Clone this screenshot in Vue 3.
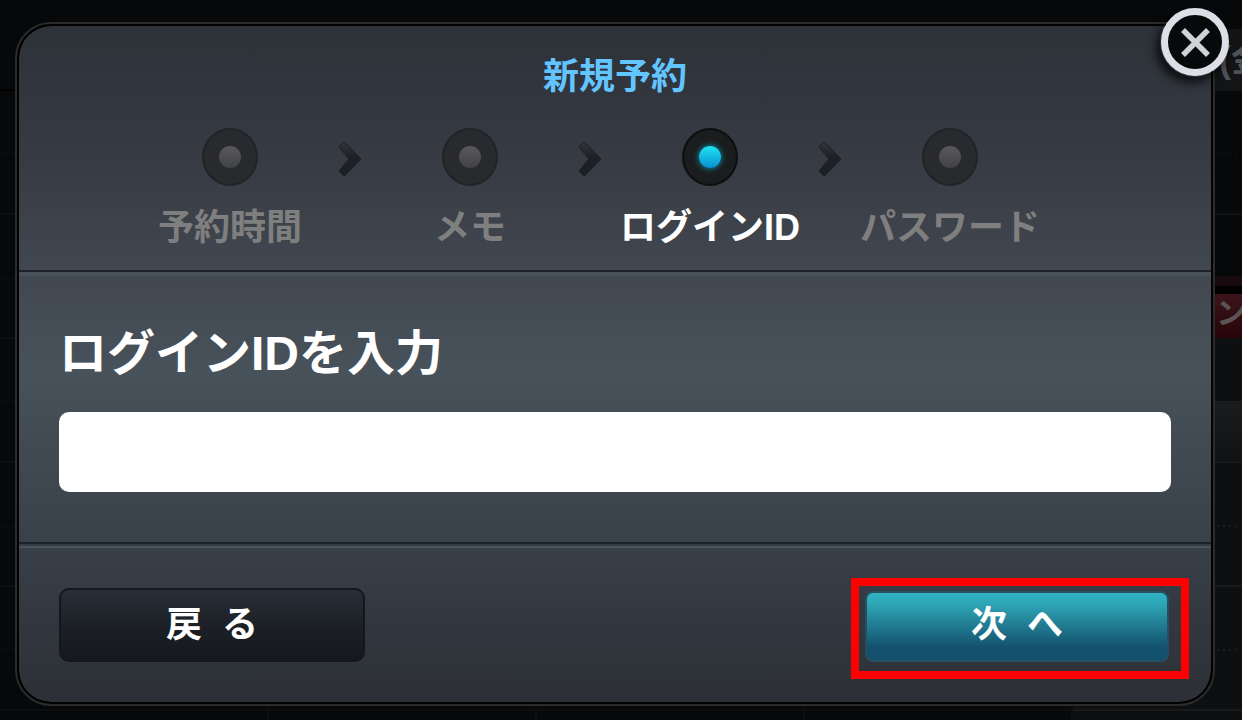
<script setup>
import { ref } from 'vue'

const loginId = ref('')
const steps = [
  { label: '予約時間', active: false },
  { label: 'メモ', active: false },
  { label: 'ログインID', active: true },
  { label: 'パスワード', active: false }
]
const rows = 6
const columns = 5
</script>

<template>
  <div class="stage">
    <div class="schedule">
      <div class="sched-head">
        <span v-for="c in columns" :key="c" class="day" :class="{ last: c === columns }">
          <template v-if="c === columns">(金)</template>
        </span>
      </div>
      <div v-for="r in rows" :key="r" class="sched-row">
        <div v-for="c in columns" :key="c" class="cell" :class="{ last: c === columns, early: r < 3, lit: c === columns && r === 3 }">
          <span v-if="c === columns && r === 2" class="chip">ン</span>
        </div>
      </div>
    </div>

    <main class="dialog" role="dialog" aria-labelledby="dialog-title">
      <button class="close" type="button" aria-label="閉じる">
        <svg viewBox="0 0 70 70" width="70" height="70" aria-hidden="true">
          <circle cx="35" cy="35" r="30.5" fill="#08090b" stroke="#dce0e6" stroke-width="7" />
          <path d="M23 23 L48 48 M48 23 L23 48" fill="none" stroke="#d0d2d6" stroke-width="5.5" />
        </svg>
      </button>
      <header class="head">
        <h1 id="dialog-title">新規予約</h1>
        <ol class="steps">
          <li v-for="(s, i) in steps" :key="s.label" :class="{ active: s.active }">
            <span class="lamp"><i></i></span>
            <span class="label">{{ s.label }}</span>
            <svg v-if="i < steps.length - 1" class="arrow" viewBox="0 0 24 38" width="24" height="38" aria-hidden="true">
              <defs>
                <linearGradient :id="'arrow' + i" x1="0" y1="0" x2="0" y2="1">
                  <stop offset="0" stop-color="#34383e" />
                  <stop offset="0.45" stop-color="#1d2024" />
                  <stop offset="1" stop-color="#1b2026" />
                </linearGradient>
              </defs>
              <path d="M1 7 L6 1.5 L23 19 L6 36.5 L1 31 L11 19 Z" :fill="'url(#arrow' + i + ')'" stroke="#1b1f24" stroke-width="1" />
            </svg>
          </li>
        </ol>
      </header>
      <section class="body">
        <label for="login-id">ログインIDを入力</label>
        <input id="login-id" v-model="loginId" type="text" autocomplete="off" />
      </section>
      <footer class="foot">
        <button class="btn back" type="button">戻&nbsp;&nbsp;る</button>
        <div class="marker">
          <button class="btn next" type="button">次&nbsp;&nbsp;へ</button>
        </div>
      </footer>
    </main>
  </div>
</template>

<style>
body {
  margin: 0;
  background: #07080a;
}
</style>

<style scoped>
.stage {
  display: grid;
  grid-template: minmax(0, 1fr) / minmax(0, 1fr);
  height: 100vh;
  min-height: 720px;
  overflow: hidden;
  font-family: "Liberation Sans", "Noto Sans CJK JP", sans-serif;
  font-weight: 700;
}
.stage > * {
  grid-area: 1 / 1;
}
.schedule {
  overflow: hidden;
  padding-left: 1px;
}
.sched-head,
.sched-row {
  display: grid;
  grid-template-columns: repeat(5, 268px);
}
.sched-head {
  height: 60px;
  padding-top: 29px;
  border-bottom: 2px solid #000;
}
.day.last {
  box-sizing: border-box;
  padding-left: 146px;
  background: #131416;
  color: #505154;
  font-size: 36px;
  line-height: 62px;
  white-space: nowrap;
}
.cell {
  box-sizing: border-box;
  height: 124px;
  border-bottom: 2px solid #0d0e10;
  border-right: 2px solid #0d0e10;
  background: linear-gradient(90deg, #0f1012 33%, transparent 33%) 0 62px / 6px 2px repeat-x, #07080a;
}
.cell.last {
  border-bottom-color: #191a1c;
  background: linear-gradient(90deg, #1a1b1d 33%, transparent 33%) 0 62px / 6px 2px repeat-x, #0e0f11;
}
.cell.last.early {
  border-bottom-color: #111214;
  background: linear-gradient(90deg, #0f1012 33%, transparent 33%) 0 62px / 6px 2px repeat-x, #07080a;
}
.cell.last.lit {
  background: linear-gradient(#0e0f11 62px, #1b1c1e 62px, #111214);
}
.chip {
  display: block;
  box-sizing: border-box;
  height: 62px;
  margin-top: 61px;
  padding-left: 143px;
  border-top: 10px solid #170b0d;
  background: linear-gradient(#000 8px, #3b151a 8px, #260408);
  color: #5c5355;
  font-size: 30px;
  line-height: 54px;
}
.dialog {
  position: relative;
  display: flex;
  flex-direction: column;
  margin: 22px 27px 14px 15px;
  border: 2px solid #2a2b2a;
  border-radius: 36px;
  box-shadow: inset 0 0 0 2px #000;
  padding: 2px;
  background: linear-gradient(#2d3138, #343840 15%, #414750 36%, #48525b 51%, #39414a 76%, #32363e 89%, #2c3036) content-box, #000;
}
.close {
  position: absolute;
  top: -17px;
  right: -17px;
  z-index: 1;
  width: 70px;
  height: 70px;
  padding: 0;
  border: 0;
  border-radius: 50%;
  background: none;
  box-shadow: -4px 6px 8px rgba(0, 0, 0, 0.7);
}
.close svg {
  display: block;
}
.head {
  height: 244px;
}
h1 {
  margin: 0;
  padding-top: 25px;
  color: #63c5ff;
  font-size: 36px;
  font-weight: 700;
  line-height: 52px;
  text-align: center;
}
.steps {
  display: grid;
  grid-template-columns: repeat(4, 1fr);
  margin: 25px 141px 0 91px;
  padding: 0;
  list-style: none;
}
.steps li {
  position: relative;
  display: flex;
  flex-direction: column;
  align-items: center;
}
.lamp {
  display: grid;
  place-items: center;
  box-sizing: border-box;
  width: 56px;
  height: 58px;
  border: 2px solid #202327;
  border-radius: 50%;
  background: #282a2d;
}
.lamp i {
  width: 22px;
  height: 22px;
  border-radius: 50%;
  background: linear-gradient(#5a5a5c, #414246);
}
.label {
  margin-top: 16px;
  color: #7f7f7f;
  font-size: 36px;
  line-height: 52px;
  white-space: nowrap;
}
.active .lamp {
  border-color: #0d0e0f;
  background: #1b1c1d;
}
.active .lamp i {
  background: linear-gradient(#1fe4f2, #0a8fd0);
  box-shadow: 0 0 6px #0aa0c0;
}
.active .label {
  color: #fff;
}
.arrow {
  position: absolute;
  top: 12px;
  right: -12px;
}
.body {
  display: flex;
  flex: 1;
  flex-direction: column;
  padding: 42px 40px 50px;
  border-top: 2px solid #1e222a;
  box-shadow: inset 0 4px 0 #48525a;
}
.body label {
  color: #fff;
  font-size: 48px;
  line-height: 80px;
}
.body input {
  box-sizing: border-box;
  width: 100%;
  height: 80px;
  margin-top: 18px;
  padding: 0 20px;
  border: 0;
  border-radius: 10px;
  background: #fff;
  color: #222;
  font: inherit;
  font-size: 36px;
}
.foot {
  display: flex;
  align-items: flex-start;
  justify-content: space-between;
  height: 124px;
  padding: 34px 22px 0 40px;
  border-top: 2px solid #1e222a;
  box-shadow: inset 0 2px 0 #353c44, inset 0 4px 0 #4b555d;
}
.btn {
  box-sizing: border-box;
  padding: 0 0 8px;
  color: #fff;
  font-family: inherit;
  font-size: 36px;
  font-weight: 700;
  white-space: pre;
}
.back {
  width: 306px;
  height: 74px;
  margin-top: 10px;
  border: 2px solid #15171d;
  border-radius: 10px;
  background: linear-gradient(#272e36, #1c2026 55%, #15181c);
}
.marker {
  padding: 5px 12px 9px 6px;
  border: 8px solid #f00;
}
.next {
  display: block;
  width: 304px;
  height: 71px;
  padding-bottom: 12px;
  border: 2px solid #24505f;
  border-radius: 8px;
  background: linear-gradient(#32b3c4, #2ea7b7 15%, #14536f 80%, #124f6b);
}
</style>
